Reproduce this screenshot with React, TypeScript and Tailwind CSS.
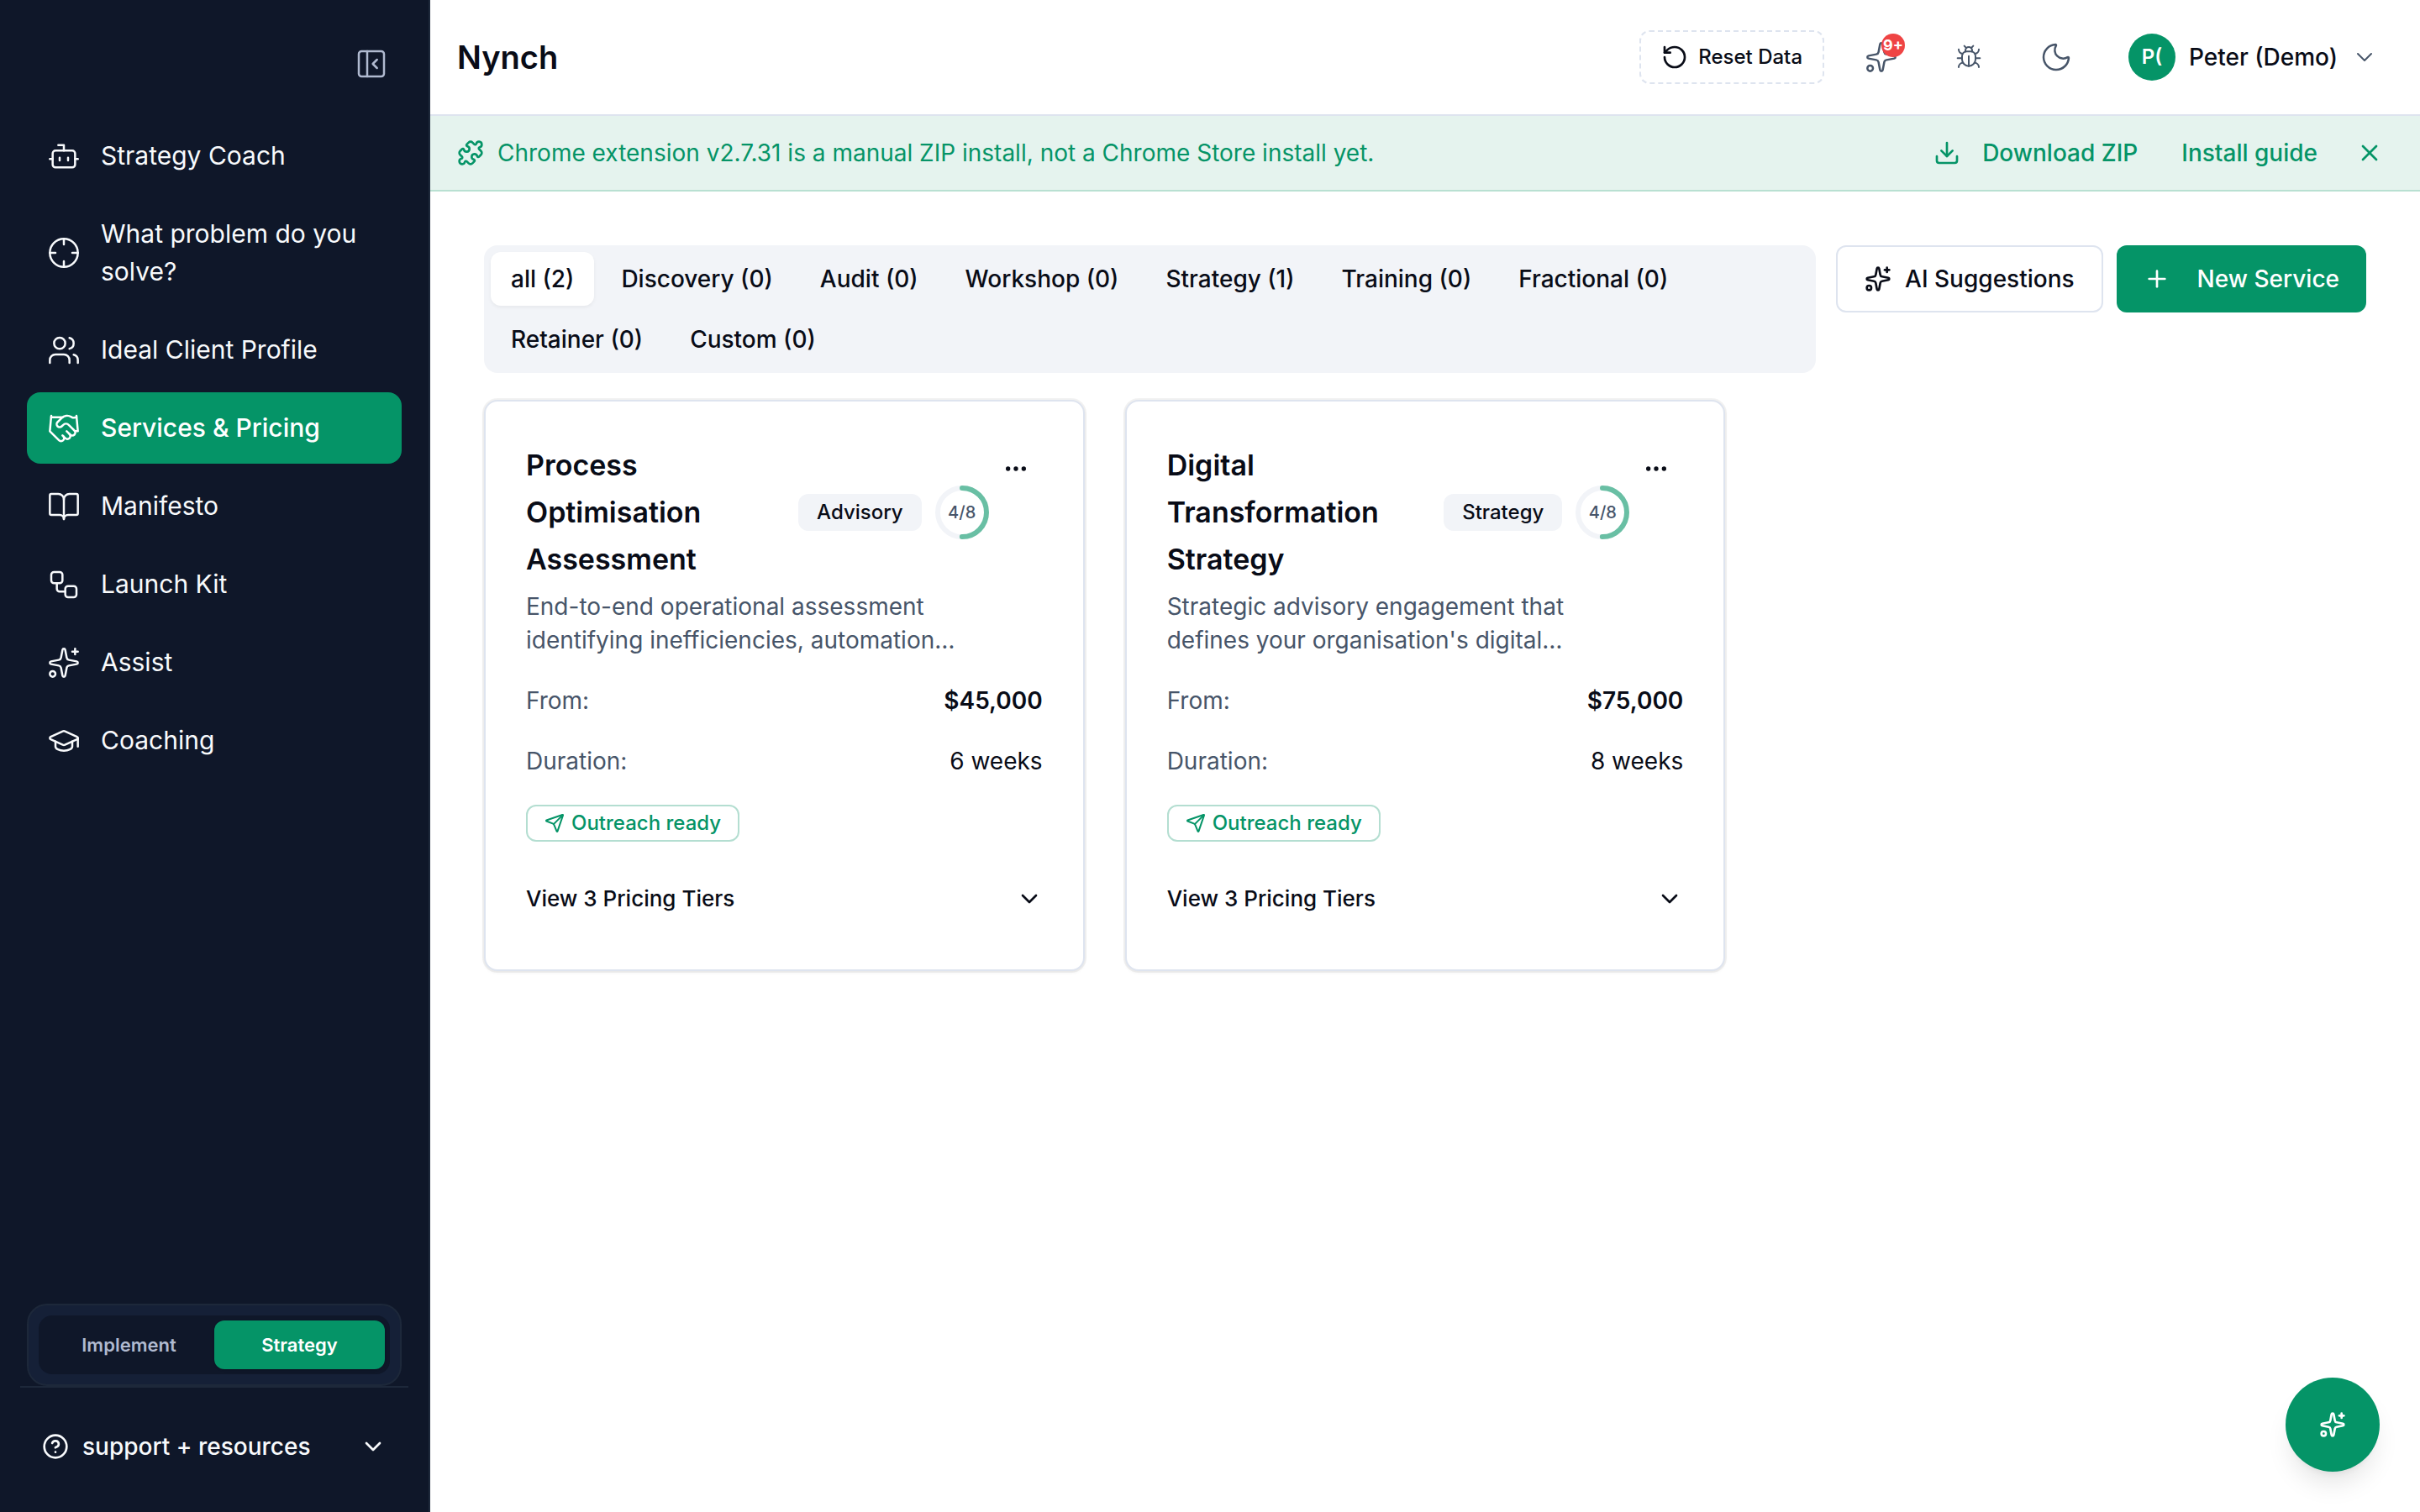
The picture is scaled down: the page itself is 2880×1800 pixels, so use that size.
import {
  BookOpen,
  Bot,
  Bug,
  ChevronDown,
  CircleQuestionMark,
  Crosshair,
  Download,
  Ellipsis,
  GraduationCap,
  Handshake,
  Moon,
  PanelLeftClose,
  Plus,
  Puzzle,
  RotateCcw,
  Send,
  Sparkles,
  Users,
  Workflow,
  X,
  type LucideIcon,
} from 'lucide-react';

const NAV: { label: string; icon: LucideIcon; active?: boolean }[] = [
  { label: 'Strategy Coach', icon: Bot },
  { label: 'What problem do you solve?', icon: Crosshair },
  { label: 'Ideal Client Profile', icon: Users },
  { label: 'Services & Pricing', icon: Handshake, active: true },
  { label: 'Manifesto', icon: BookOpen },
  { label: 'Launch Kit', icon: Workflow },
  { label: 'Assist', icon: Sparkles },
  { label: 'Coaching', icon: GraduationCap },
];

const TABS = [
  'all (2)',
  'Discovery (0)',
  'Audit (0)',
  'Workshop (0)',
  'Strategy (1)',
  'Training (0)',
  'Fractional (0)',
  'Retainer (0)',
  'Custom (0)',
];

type Service = {
  title: string;
  kind: string;
  done: number;
  total: number;
  description: string;
  price: string;
  duration: string;
};

const SERVICES: Service[] = [
  {
    title: 'Process Optimisation Assessment',
    kind: 'Advisory',
    done: 4,
    total: 8,
    description:
      'End-to-end operational assessment identifying inefficiencies, automation…',
    price: '$45,000',
    duration: '6 weeks',
  },
  {
    title: 'Digital Transformation Strategy',
    kind: 'Strategy',
    done: 4,
    total: 8,
    description:
      "Strategic advisory engagement that defines your organisation's digital…",
    price: '$75,000',
    duration: '8 weeks',
  },
];

function Sidebar() {
  return (
    <aside className="sticky top-0 flex h-screen w-[512px] shrink-0 flex-col border-r-2 border-[#1d283a] bg-[#0f1729] text-[#f8fafc]">
      <div className="flex justify-end px-8 pt-10">
        <button
          type="button"
          aria-label="Collapse sidebar"
          className="flex size-[72px] items-center justify-center text-[#b0bad0]"
        >
          <PanelLeftClose size={40} strokeWidth={1.5} />
        </button>
      </div>

      <nav className="mt-[31px] flex flex-1 flex-col gap-2 px-8">
        {NAV.map(({ label, icon: Icon, active }) => (
          <a
            key={label}
            href="#"
            aria-current={active ? 'page' : undefined}
            className={
              active
                ? 'flex items-center gap-6 rounded-2xl bg-[#059467] px-6 py-5 text-[30px] leading-[45px] font-medium text-white'
                : 'flex items-center gap-6 rounded-2xl px-6 py-5 text-[30px] leading-[45px]'
            }
          >
            <Icon size={40} strokeWidth={1.5} className="shrink-0" />
            <span>{label}</span>
          </a>
        ))}
      </nav>

      <div className="px-8">
        <div className="rounded-3xl border-2 border-[#1d283a] bg-[#152037] p-3">
          <div className="grid grid-cols-2 rounded-2xl bg-[#0f1729] p-1.5 text-[22px] leading-[30px] font-semibold">
            <button type="button" className="rounded-xl py-3.5 text-[#b0bad0]">
              Implement
            </button>
            <button
              type="button"
              className="rounded-xl bg-[#059467] py-3.5 text-white shadow-sm"
            >
              Strategy
            </button>
          </div>
        </div>
      </div>

      <div className="mx-6 border-t-2 border-[#1d283a] pt-7 pb-9">
        <button
          type="button"
          className="flex h-[84px] w-full items-center gap-4 px-[26px] text-[28px] leading-10 font-medium"
        >
          <CircleQuestionMark size={32} strokeWidth={2} />
          support + resources
          <ChevronDown size={32} strokeWidth={2} className="ml-auto" />
        </button>
      </div>
    </aside>
  );
}

function Header() {
  return (
    <header className="flex items-center justify-between border-b-2 border-[#dee4ef] px-8 py-8">
      <h1 className="text-[38px] leading-[56px] font-semibold">Nynch</h1>
      <div className="flex items-center gap-8 text-[#475569]">
        <button
          type="button"
          className="flex h-16 items-center gap-3 rounded-xl border-2 border-dashed border-[#dee4ef] px-6 text-2xl font-medium text-[#090c17]"
        >
          <RotateCcw size={32} strokeWidth={2} />
          Reset Data
        </button>
        <button
          type="button"
          aria-label="Notifications"
          className="relative flex size-[72px] items-center justify-center"
        >
          <Sparkles size={40} strokeWidth={1.5} />
          <span className="absolute top-2 right-2 flex size-7 items-center justify-center rounded-full bg-[#ef4444] text-lg leading-7 font-bold text-white">
            9+
          </span>
        </button>
        <button
          type="button"
          aria-label="Report a bug"
          className="flex size-[72px] items-center justify-center"
        >
          <Bug size={32} strokeWidth={1.5} />
        </button>
        <button
          type="button"
          aria-label="Dark mode"
          className="flex size-[72px] items-center justify-center"
        >
          <Moon size={40} strokeWidth={1.5} />
        </button>
        <button
          type="button"
          className="flex h-[72px] items-center gap-4 px-[18px] text-[28px] font-medium"
        >
          <span className="flex size-14 items-center justify-center rounded-full bg-[#059467] text-2xl font-semibold text-white">
            P(
          </span>
          <span className="text-[#090c17]">Peter (Demo)</span>
          <ChevronDown size={32} strokeWidth={1.5} />
        </button>
      </div>
    </header>
  );
}

function Banner() {
  return (
    <div className="flex items-center border-b-2 border-[#b9e0d2] bg-[#e5f3ee] px-8 py-4 text-[28px] leading-10 text-[#059467]">
      <Puzzle size={32} strokeWidth={2} className="shrink-0" />
      <p className="ml-4 flex-1">
        Chrome extension v2.7.31 is a manual ZIP install, not a Chrome Store
        install yet.
      </p>
      <div className="flex items-center gap-4 font-medium">
        <a href="#" className="flex items-center gap-[26px] px-[18px]">
          <Download size={32} strokeWidth={2} />
          Download ZIP
        </a>
        <a href="#" className="px-[18px]">
          Install guide
        </a>
        <button
          type="button"
          aria-label="Dismiss"
          className="flex size-14 items-center justify-center"
        >
          <X size={32} strokeWidth={2} />
        </button>
      </div>
    </div>
  );
}

function Toolbar() {
  return (
    <div className="flex items-start gap-6 text-[28px] leading-10 font-medium">
      <div
        role="tablist"
        className="flex flex-1 flex-wrap gap-2 rounded-2xl bg-[#f2f4f8] p-2"
      >
        {TABS.map((tab, i) => (
          <button
            key={tab}
            type="button"
            role="tab"
            aria-selected={i === 0}
            className={
              i === 0
                ? 'rounded-xl bg-white px-6 py-3 shadow-[0_2px_4px_rgba(0,0,0,0.05)]'
                : 'rounded-xl px-6 py-3'
            }
          >
            {tab}
          </button>
        ))}
      </div>
      <div className="flex gap-4">
        <button
          type="button"
          className="flex h-20 items-center gap-4 rounded-xl border-2 border-[#dee4ef] px-8"
        >
          <Sparkles size={32} strokeWidth={2} />
          AI Suggestions
        </button>
        <button
          type="button"
          className="flex h-20 items-center gap-8 rounded-xl bg-[#059467] px-8 text-white"
        >
          <Plus size={32} strokeWidth={2} />
          New Service
        </button>
      </div>
    </div>
  );
}

function ProgressRing({ done, total }: { done: number; total: number }) {
  const circumference = 2 * Math.PI * 29;
  return (
    <div className="relative flex size-16 shrink-0 items-center justify-center">
      <svg viewBox="0 0 64 64" className="absolute inset-0 size-16 -rotate-90">
        <circle cx="32" cy="32" r="29" fill="none" stroke="#f2f4f8" strokeWidth="6" />
        <circle
          cx="32"
          cy="32"
          r="29"
          fill="none"
          stroke="#69bfa4"
          strokeWidth="6"
          strokeLinecap="round"
          strokeDasharray={circumference}
          strokeDashoffset={circumference * (1 - done / total)}
        />
      </svg>
      <span className="relative text-xl font-medium text-[#475569]">
        {done}/{total}
      </span>
    </div>
  );
}

function ServiceCard({ service }: { service: Service }) {
  return (
    <article className="flex flex-col gap-8 rounded-2xl border-2 border-[#dee4ef] bg-white p-12 text-[28px] leading-10 shadow-[0_0_0_2px_rgba(0,0,0,0.05),0_2px_4px_rgba(0,0,0,0.05)]">
      <div className="flex items-start">
        <div className="flex flex-1 flex-col gap-2">
          <div className="flex items-center gap-4">
            <h2 className="flex-1 text-[34px] leading-[56px] font-semibold">
              {service.title}
            </h2>
            <span className="flex h-11 items-center rounded-xl bg-[#f2f4f8] px-[22px] text-2xl font-medium">
              {service.kind}
            </span>
            <ProgressRing done={service.done} total={service.total} />
          </div>
          <p className="text-[#475569]">{service.description}</p>
        </div>
        <button
          type="button"
          aria-label="More actions"
          className="flex size-16 items-center justify-center"
        >
          <Ellipsis size={32} strokeWidth={2} />
        </button>
      </div>

      <dl className="flex flex-col gap-8">
        <div className="flex justify-between">
          <dt className="text-[#475569]">From:</dt>
          <dd className="font-semibold">{service.price}</dd>
        </div>
        <div className="flex justify-between">
          <dt className="text-[#475569]">Duration:</dt>
          <dd>{service.duration}</dd>
        </div>
      </dl>

      <span className="flex h-11 items-center gap-2 self-start rounded-xl border-2 border-[#b4ded1] px-5 text-2xl font-medium text-[#059467]">
        <Send size={24} strokeWidth={2} />
        Outreach ready
      </span>

      <button
        type="button"
        className="flex h-[72px] items-center justify-between text-[26px] font-medium"
      >
        View 3 Pricing Tiers
        <ChevronDown size={32} strokeWidth={2} />
      </button>
    </article>
  );
}

export default function App() {
  return (
    <div className="flex min-h-screen bg-white font-['Inter',sans-serif] text-[#090c17]">
      <Sidebar />
      <div className="flex min-w-0 flex-1 flex-col">
        <Header />
        <Banner />
        <main className="flex flex-col gap-8 p-16">
          <Toolbar />
          <div className="grid grid-cols-3 items-start gap-12">
            {SERVICES.map((service) => (
              <ServiceCard key={service.title} service={service} />
            ))}
          </div>
        </main>
      </div>
      <button
        type="button"
        aria-label="Open assistant"
        className="fixed right-12 bottom-12 flex size-28 items-center justify-center rounded-full bg-[#059467] text-white shadow-[0_20px_30px_-6px_rgba(0,0,0,0.1),0_8px_12px_-8px_rgba(0,0,0,0.1)]"
      >
        <Sparkles size={32} strokeWidth={2} />
      </button>
    </div>
  );
}
